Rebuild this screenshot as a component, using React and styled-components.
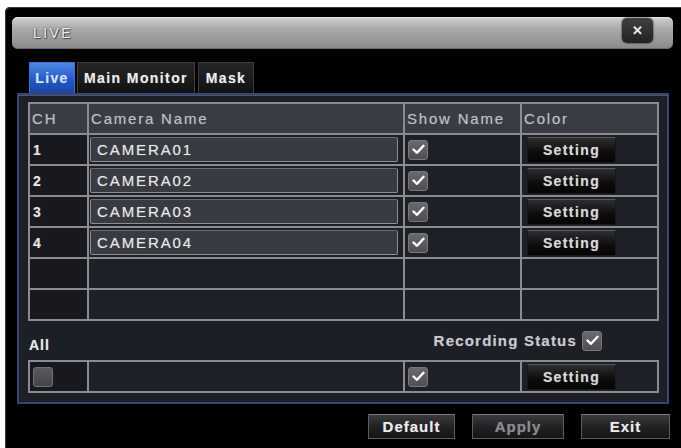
import React from 'react'
import styled, { createGlobalStyle } from 'styled-components'

const GlobalStyle = createGlobalStyle`
  html, body {
    margin: 0;
    padding: 0;
    background: #fff;
  }
  body {
    font-family: "Liberation Sans", Arial, sans-serif;
  }
`

const Screen = styled.div`
  width: 681px;
  height: 448px;
  padding: 7px 0 0 5px;
  box-sizing: border-box;
  overflow: hidden;
`

const Window = styled.div`
  width: 680px;
  height: 441px;
  background: #000;
  border-top-left-radius: 5px;
  box-shadow: inset 1px 1px 0 #3a3a3a;
  display: flex;
  flex-direction: column;
`

const TitleBar = styled.div`
  margin: 10px 0 0 7px;
  width: 661px;
  height: 32px;
  border-radius: 6px;
  background: linear-gradient(#d2d2d2 0%, #ababab 35%, #979797 75%, #888 100%);
  box-shadow: inset 0 1px 0 #e6e6e6, inset 0 -1px 0 #6a6a6a;
  display: flex;
  align-items: flex-start;
  justify-content: space-between;
  box-sizing: border-box;
  padding: 0 20px 0 21px;
`

const Title = styled.span`
  margin-top: 8px;
  font-size: 14px;
  letter-spacing: 2.4px;
  color: #f0f0f0;
  text-shadow: 0 0 2px #333, 1px 1px 0 #555;
`

const CloseButton = styled.div`
  margin-top: 1px;
  width: 31px;
  height: 25px;
  border-radius: 5px;
  background: linear-gradient(#404040, #222);
  box-shadow: 0 0 2px #000;
  display: flex;
  align-items: center;
  justify-content: center;
  color: #ececec;
  font-size: 13px;
  font-weight: bold;
`

const TabRow = styled.div`
  margin: 13px 0 0 24px;
  height: 31px;
  display: flex;
  gap: 2px;
`

const Tab = styled.div`
  width: ${({ $w }) => $w}px;
  height: 31px;
  box-sizing: border-box;
  display: flex;
  align-items: center;
  justify-content: center;
  font-size: 14px;
  font-weight: bold;
  letter-spacing: 1.4px;
  color: ${({ $active }) => ($active ? '#cfe0ff' : '#ececec')};
  margin-right: ${({ $gap }) => $gap || 0}px;
  background: ${({ $active }) =>
    $active ? 'linear-gradient(#4d8ae6, #2458c8 55%, #1a46a8)' : 'linear-gradient(#262626, #111)'};
  border: 1px solid ${({ $active }) => ($active ? '#3a6fd0' : '#3c3c3c')};
  border-bottom: none;
  text-shadow: 0 0 1px rgba(255, 255, 255, 0.4);
`

const Panel = styled.div`
  margin-left: 12px;
  width: 652px;
  height: 311px;
  box-sizing: border-box;
  border: 2px solid #3b4573;
  background: #1d1f27;
  box-shadow: inset 0 1px 0 #4b5370;
  padding: 7px 8px 9px 9px;
  display: flex;
  flex-direction: column;
`

const Grid = styled.div`
  display: grid;
  grid-template-columns: 57px 314px 115px 135px;
  grid-template-rows: ${({ $rows }) => $rows};
  gap: 2px;
  border: 2px solid #8b8b90;
  background: #8b8b90;
`

const Cell = styled.div`
  background: ${({ $head, $dim }) => ($head ? '#3a3c44' : $dim ? '#18191e' : '#1e2028')};
  display: flex;
  align-items: center;
  padding-left: ${({ $pad }) => ($pad === undefined ? 2 : $pad)}px;
  font-size: ${({ $head }) => ($head ? 15 : 14)}px;
  letter-spacing: ${({ $head }) => ($head ? 1.8 : 1)}px;
  color: ${({ $head }) => ($head ? '#bebec2' : '#e4e4e4')};
  font-weight: ${({ $bold }) => ($bold ? 'bold' : 'normal')};
  text-shadow: 0 0 1px rgba(255, 255, 255, 0.35);
  overflow: hidden;
`

const NameInput = styled.div`
  width: 308px;
  height: 25px;
  box-sizing: border-box;
  border: 1px solid #8e8e92;
  border-top-color: #6c6c70;
  border-radius: 2px;
  background: #393b42;
  display: flex;
  align-items: center;
  padding-left: 6px;
  font-size: 15px;
  letter-spacing: 1.9px;
  color: #e8e8e8;
  text-shadow: 0 0 1px rgba(255, 255, 255, 0.4);
`

const CheckBox = styled.div`
  width: 20px;
  height: 20px;
  box-sizing: border-box;
  margin-left: ${({ $ml }) => ($ml === undefined ? 1 : $ml)}px;
  border-radius: 3px;
  background: ${({ $on }) => ($on ? 'linear-gradient(#6a6a6e, #4e4e53)' : 'linear-gradient(#5a5a5e, #444448)')};
  border: 1px solid ${({ $on }) => ($on ? '#77777c' : '#707074')};
  display: flex;
  align-items: center;
  justify-content: center;
`

const SettingButton = styled.div`
  margin-left: 3px;
  width: 89px;
  height: 26px;
  box-sizing: border-box;
  background: linear-gradient(#2e2e30, #0c0c0d 60%, #050505);
  border: 1px solid #1a1a1a;
  border-top-color: #5a5a5c;
  display: flex;
  align-items: center;
  justify-content: center;
  font-size: 14px;
  font-weight: bold;
  letter-spacing: 1.4px;
  color: #d8d8d8;
  text-shadow: 0 0 1px rgba(255, 255, 255, 0.4);
`

const AllRow = styled.div`
  height: 39px;
  display: flex;
  align-items: center;
  justify-content: space-between;
`

const AllLabel = styled.span`
  margin: 8px 0 0 1px;
  font-size: 14px;
  font-weight: bold;
  letter-spacing: 1px;
  color: #e8e8e8;
  text-shadow: 0 0 1px rgba(255, 255, 255, 0.4);
`

const RecordStatus = styled.div`
  margin-right: 57px;
  display: flex;
  align-items: center;
  gap: 5px;
  font-size: 15px;
  font-weight: bold;
  letter-spacing: 1.2px;
  color: #cacace;
  text-shadow: 0 0 1px rgba(255, 255, 255, 0.35);
`

const ButtonBar = styled.div`
  margin-top: 10px;
  padding-right: 15px;
  display: flex;
  justify-content: flex-end;
  gap: 17px;
`

const ActionButton = styled.div`
  width: ${({ $w }) => $w}px;
  height: 25px;
  box-sizing: border-box;
  background: linear-gradient(#3a3a3c, #202022 55%, #151516);
  border: 1px solid #5c5c5e;
  border-top-color: #7a7a7c;
  display: flex;
  align-items: center;
  justify-content: center;
  font-size: 15px;
  font-weight: bold;
  letter-spacing: 1px;
  color: ${({ $off }) => ($off ? '#8a8a8c' : '#ececec')};
  text-shadow: 0 0 1px rgba(255, 255, 255, 0.35);
`

const Check = () => (
  <svg width="13" height="11" viewBox="0 0 13 11">
    <path d="M1.5 5.5 L5 8.8 L11.5 1.8" fill="none" stroke="#fff" strokeWidth="2.4" strokeLinecap="round" strokeLinejoin="round" />
  </svg>
)

const cameras = ['CAMERA01', 'CAMERA02', 'CAMERA03', 'CAMERA04']

const App = () => {
  return (
    <>
      <GlobalStyle />
      <Screen>
        <Window>
          <TitleBar>
            <Title>LIVE</Title>
            <CloseButton>✕</CloseButton>
          </TitleBar>

          <TabRow>
            <Tab $w={46} $active>Live</Tab>
            <Tab $w={118} $gap={1}>Main Monitor</Tab>
            <Tab $w={56}>Mask</Tab>
          </TabRow>

          <Panel>
            <Grid $rows="29px repeat(6, 29px)">
              <Cell $head>CH</Cell>
              <Cell $head>Camera Name</Cell>
              <Cell $head>Show Name</Cell>
              <Cell $head>Color</Cell>

              {cameras.map((name, i) => (
                <React.Fragment key={name}>
                  <Cell $dim $bold $pad={3}>{i + 1}</Cell>
                  <Cell $pad={1}>
                    <NameInput>{name}</NameInput>
                  </Cell>
                  <Cell>
                    <CheckBox $on><Check /></CheckBox>
                  </Cell>
                  <Cell $pad={2}>
                    <SettingButton>Setting</SettingButton>
                  </Cell>
                </React.Fragment>
              ))}

              {[0, 1].map((r) =>
                [0, 1, 2, 3].map((c) => <Cell key={`${r}-${c}`} $dim={c === 0} />)
              )}
            </Grid>

            <AllRow>
              <AllLabel>All</AllLabel>
              <RecordStatus>
                Recording Status
                <CheckBox $on $ml={0}><Check /></CheckBox>
              </RecordStatus>
            </AllRow>

            <Grid $rows="29px">
              <Cell $dim $pad={3}>
                <CheckBox $ml={0} />
              </Cell>
              <Cell />
              <Cell>
                <CheckBox $on><Check /></CheckBox>
              </Cell>
              <Cell $pad={2}>
                <SettingButton>Setting</SettingButton>
              </Cell>
            </Grid>
          </Panel>

          <ButtonBar>
            <ActionButton $w={87}>Default</ActionButton>
            <ActionButton $w={92} $off>Apply</ActionButton>
            <ActionButton $w={89}>Exit</ActionButton>
          </ButtonBar>
        </Window>
      </Screen>
    </>
  )
}

export default App
